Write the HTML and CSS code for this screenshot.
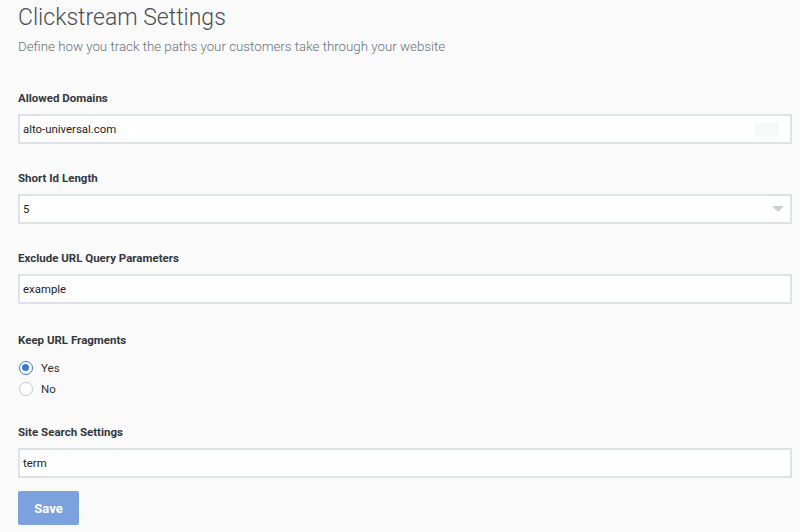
FILE: index.html
```html
<!DOCTYPE html>
<html>
<head>
<meta charset="utf-8">
<link rel="stylesheet" href="styles.css">
</head>
<body>
<div class="page">
  <h1 class="title">Clickstream Settings</h1>
  <p class="subtitle">Define how you track the paths your customers take through your website</p>

  <div class="field first">
    <div class="label">Allowed Domains</div>
    <div class="input">
      <span>alto-universal.com</span>
      <span class="autofill"></span>
    </div>
  </div>

  <div class="field">
    <div class="label">Short Id Length</div>
    <div class="input">
      <span>5</span>
      <span class="caret"></span>
    </div>
  </div>

  <div class="field third">
    <div class="label">Exclude URL Query Parameters</div>
    <div class="input"><span>example</span></div>
  </div>

  <div class="field radios-field">
    <div class="label">Keep URL Fragments</div>
    <div class="radios">
      <div class="radio-row"><span class="radio checked"></span><span class="radio-text">Yes</span></div>
      <div class="radio-row"><span class="radio"></span><span class="radio-text">No</span></div>
    </div>
  </div>

  <div class="field last">
    <div class="label">Site Search Settings</div>
    <div class="input"><span>term</span></div>
  </div>

  <button class="save">Save</button>
</div>
</body>
</html>
```

FILE: styles.css
```css
html, body {
  margin: 0;
  padding: 0;
  background: #fafafb;
}
body {
  font-family: Roboto, "Liberation Sans", sans-serif;
  color: #333;
}
.page {
  padding: 3px 8px 0 18px;
  display: flex;
  flex-direction: column;
}
.title {
  margin: 0;
  font-weight: 300;
  font-size: 23px;
  line-height: 30px;
  color: #4a4f57;
}
.subtitle {
  margin: 5px 0 0 0;
  font-weight: 300;
  font-size: 13.3px;
  line-height: 18px;
  color: #6b7079;
}
.field {
  display: flex;
  flex-direction: column;
  margin-bottom: 27px;
}
.field.first {
  margin-top: 35px;
}
.field.third {
  margin-bottom: 29px;
}
.label {
  font-size: 11.5px;
  font-weight: 700;
  line-height: 14px;
  color: #33373d;
  margin-bottom: 9px;
}
.input {
  height: 30px;
  box-sizing: border-box;
  border: 2px solid #dde1e8;
  background: #fff;
  display: flex;
  align-items: center;
  justify-content: space-between;
  padding: 0 5px 0 3px;
  font-size: 11.4px;
  color: #222;
}
.autofill {
  width: 24px;
  height: 15px;
  background: #f7f8fa;
  margin-right: 6px;
}
.caret {
  width: 0;
  height: 0;
  border-left: 6px solid transparent;
  border-right: 6px solid transparent;
  border-top: 6px solid #c9ced6;
  margin-right: 1px;
}
.radios {
  display: flex;
  flex-direction: column;
  gap: 7px;
  margin-top: 5px;
}
.radio-row {
  display: flex;
  align-items: center;
  height: 14px;
}
.radio {
  width: 14px;
  height: 14px;
  border-radius: 50%;
  border: 1px solid #c4c9d1;
  background: #fff;
  box-sizing: border-box;
  margin-left: 1px;
  margin-right: 8px;
  position: relative;
  flex: none;
}
.radio.checked {
  border: 1.5px solid #3b78d6;
}
.radio.checked::after {
  content: "";
  position: absolute;
  left: 2px;
  top: 2px;
  width: 7px;
  height: 7px;
  border-radius: 50%;
  background: #3b78d6;
}
.radio-text {
  font-size: 11.5px;
  color: #333;
}
.radios-field {
  margin-bottom: 29px;
}
.last {
  margin-bottom: 13px;
}
.save {
  width: 61px;
  height: 34px;
  border: none;
  border-radius: 2px;
  background: #7ba2dc;
  color: #fff;
  font-family: Roboto, "Liberation Sans", sans-serif;
  font-weight: 700;
  font-size: 13px;
  padding: 0;
}
```
